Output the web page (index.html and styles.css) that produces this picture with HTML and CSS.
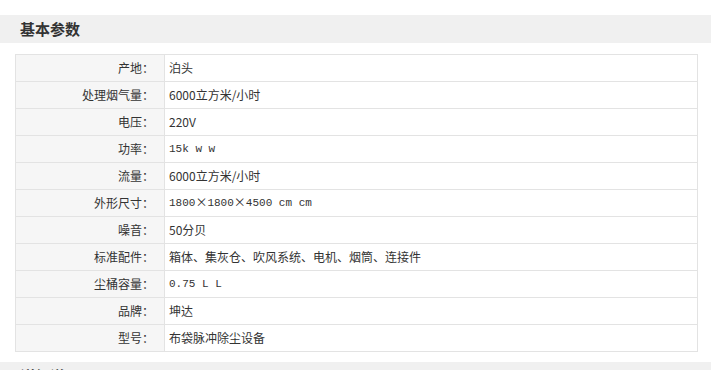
FILE: index.html
```html
<!DOCTYPE html>
<html lang="zh">
<head>
<meta charset="utf-8">
<link rel="stylesheet" href="styles.css">
</head>
<body>
<div class="section">
  <div class="bar"><h2 class="bar-title">基本参数</h2></div>
  <table class="params">
    <tr><th>产地：</th><td>泊头</td></tr>
    <tr><th>处理烟气量：</th><td>6000立方米/小时</td></tr>
    <tr><th>电压：</th><td>220V</td></tr>
    <tr><th>功率：</th><td class="mono">15k w w</td></tr>
    <tr><th>流量：</th><td>6000立方米/小时</td></tr>
    <tr><th>外形尺寸：</th><td class="mono">1800<span class="times">×</span>1800<span class="times">×</span>4500 cm cm</td></tr>
    <tr><th>噪音：</th><td>50分贝</td></tr>
    <tr><th>标准配件：</th><td>箱体、集灰仓、吹风系统、电机、烟筒、连接件</td></tr>
    <tr><th>尘桶容量：</th><td class="mono">0.75 L L</td></tr>
    <tr><th>品牌：</th><td>坤达</td></tr>
    <tr><th>型号：</th><td>布袋脉冲除尘设备</td></tr>
  </table>
  <div class="bar"><h2 class="bar-title">详细说明</h2></div>
</div>
</body>
</html>
```
FILE: styles.css
```css
html, body {
  margin: 0;
  padding: 0;
  background: #fff;
}
body {
  font-family: "Noto Sans CJK SC", "Liberation Sans", sans-serif;
  font-size: 12px;
  color: #333;
  height: 370px;
  overflow: hidden;
}
.section {
  padding-top: 15px;
}
.bar {
  background: #f0f0f0;
  height: 28px;
  padding-left: 20px;
  display: flex;
  align-items: center;
}
.bar-title {
  margin: 0;
  font-size: 15px;
  font-weight: bold;
  color: #333;
  line-height: 28px;
}
.params {
  border-collapse: collapse;
  margin: 11px 0 10px 15px;
  width: 683px;
}
.params th,
.params td {
  border: 1px solid #e3e3e3;
  height: 26px;
  padding: 0;
  font-weight: normal;
  line-height: 26px;
  white-space: nowrap;
  box-sizing: border-box;
}
.params tr {
  height: 27px;
}
.params th {
  width: 149px;
  background: #f6f6f6;
  text-align: right;
  padding-right: 10px;
}
.params td {
  padding-left: 4px;
  text-align: left;
}
.params td.mono {
  font-family: "Liberation Mono", "Noto Sans CJK SC", monospace;
  font-size: 11px;
}
.times {
  font-family: "Noto Sans CJK SC", sans-serif;
  font-size: 12px;
  line-height: 1;
  display: inline-block;
  vertical-align: -1px;
}
```
